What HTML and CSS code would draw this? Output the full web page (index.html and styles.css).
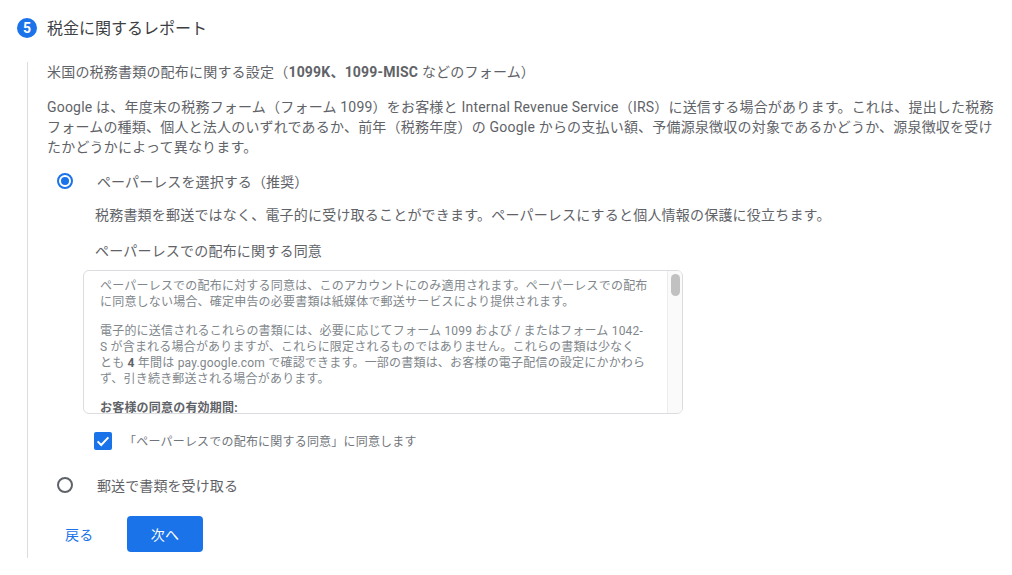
FILE: index.html
```html
<!DOCTYPE html>
<html lang="ja">
<head>
<meta charset="utf-8">
<title>税金に関するレポート</title>
<link rel="stylesheet" href="styles.css">
</head>
<body>
<div class="header">
  <span class="badge">5</span>
  <h2 class="title">税金に関するレポート</h2>
</div>
<div class="step">
  <p class="lead">米国の税務書類の配布に関する設定（<b>1099K、1099-MISC</b> などのフォーム）</p>
  <p class="intro">Google は、年度末の税務フォーム（フォーム 1099）をお客様と Internal Revenue Service（IRS）に送信する場合があります。これは、提出した税務<br>フォームの種類、個人と法人のいずれであるか、前年（税務年度）の Google からの支払い額、予備源泉徴収の対象であるかどうか、源泉徴収を受け<br>たかどうかによって異なります。</p>
  <div class="radio-row first">
    <span class="radio on"></span>
    <span class="radio-label">ペーパーレスを選択する（推奨）</span>
  </div>
  <div class="option">
    <p class="desc">税務書類を郵送ではなく、電子的に受け取ることができます。ペーパーレスにすると個人情報の保護に役立ちます。</p>
    <p class="consent-title">ペーパーレスでの配布に関する同意</p>
    <div class="consent-box">
      <div class="consent-text">
        <p>ペーパーレスでの配布に対する同意は、このアカウントにのみ適用されます。ペーパーレスでの配布<br>に同意しない場合、確定申告の必要書類は紙媒体で郵送サービスにより提供されます。</p>
        <p>電子的に送信されるこれらの書類には、必要に応じてフォーム 1099 および / またはフォーム 1042-<br>S が含まれる場合がありますが、これらに限定されるものではありません。これらの書類は少なく<br>とも <b>4</b> 年間は pay.google.com で確認できます。一部の書類は、お客様の電子配信の設定にかかわら<br>ず、引き続き郵送される場合があります。</p>
        <p><b>お客様の同意の有効期間:</b></p>
      </div>
      <div class="scrollbar"><span class="thumb"></span></div>
    </div>
    <div class="check-row">
      <span class="checkbox"><svg viewBox="0 0 18 18" width="18" height="18"><path d="M3.6 9.4l3.6 3.6 7.2-7.6" fill="none" stroke="#fff" stroke-width="2"/></svg></span>
      <span class="check-label">「ペーパーレスでの配布に関する同意」に同意します</span>
    </div>
  </div>
  <div class="radio-row second">
    <span class="radio"></span>
    <span class="radio-label">郵送で書類を受け取る</span>
  </div>
  <div class="actions">
    <button class="btn-back">戻る</button>
    <button class="btn-next">次へ</button>
  </div>
</div>
</body>
</html>
```
FILE: styles.css
```css
* { box-sizing: border-box; }
html, body { margin: 0; padding: 0; background: #fff; }
body {
  width: 1012px;
  height: 575px;
  overflow: hidden;
  font-family: Roboto, "Noto Sans CJK JP", sans-serif;
  color: #5f6368;
  font-size: 14px;
  letter-spacing: 0.2px;
}
p { margin: 0; }
b { font-weight: 700; }
.header {
  display: flex;
  align-items: center;
  gap: 10px;
  height: 20px;
  margin: 18px 0 0 17px;
}
.badge {
  width: 20px;
  height: 20px;
  border-radius: 50%;
  background: #1a73e8;
  color: #fff;
  font-size: 14px;
  font-weight: 700;
  letter-spacing: 0;
  display: flex;
  align-items: center;
  justify-content: center;
}
.title {
  margin: 0 0 3px;
  font-size: 16px;
  font-weight: 400;
  letter-spacing: 0;
  color: #3c4043;
}
.step {
  margin: 24px 0 0 27px;
  width: 975px;
  height: 496px;
  border-left: 1px solid #dadce0;
  padding-left: 19px;
}
.lead { line-height: 20px; }
.intro { line-height: 20px; margin-top: 15px; white-space: nowrap; }
.radio-row { display: flex; align-items: center; height: 20px; }
.radio-row.first { margin-top: 14px; }
.radio-row.second { margin-top: 25px; }
.radio {
  width: 16px;
  height: 16px;
  margin-left: 10px;
  border: 2px solid #5f6368;
  border-radius: 50%;
  flex: none;
  position: relative;
}
.radio.on { border-color: #1a73e8; }
.radio.on::after {
  content: "";
  position: absolute;
  inset: 2px;
  background: #1a73e8;
  border-radius: 50%;
}
.radio-label { margin-left: 24px; letter-spacing: 0.1px; }
.option { padding-left: 48px; }
.desc { margin-top: 14px; line-height: 20px; }
.consent-title { margin-top: 16px; line-height: 20px; }
.consent-box {
  display: flex;
  width: 600px;
  height: 144px;
  margin-top: 9px;
  margin-left: -12px;
  border: 1px solid #dadce0;
  border-radius: 6px;
  overflow: hidden;
}
.consent-text {
  flex: 1;
  padding: 8px 12px 0 16px;
  font-size: 12px;
  line-height: 15.7px;
  white-space: nowrap;
  color: #80868b;
  overflow: hidden;
}
.consent-text p { margin-bottom: 14px; }
.consent-text b { color: #5f6368; }
.scrollbar {
  width: 15px;
  flex: none;
  background: #fafafa;
  border-left: 1px solid #ececec;
  padding: 3px 2px;
}
.thumb { display: block; width: 9px; height: 22px; border-radius: 5px; background: #c1c1c1; margin-left: 1px; }
.check-row { display: flex; align-items: center; margin-top: 18px; margin-left: -1px; height: 18px; }
.checkbox { width: 18px; height: 18px; border-radius: 2px; background: #1a73e8; flex: none; display: flex; }
.check-label { margin: 0 0 2px 12px; font-size: 12px; color: #70757a; }
.actions { display: flex; align-items: center; margin-top: 21px; margin-left: 10px; }
.btn-back, .btn-next {
  font: inherit;
  letter-spacing: inherit;
  border: 0;
  cursor: pointer;
}
.btn-back { background: none; color: #1a73e8; padding: 0; width: 62px; text-align: left; margin-left: 8px; }
.btn-next {
  width: 76px;
  height: 36px;
  background: #1a73e8;
  color: #fff;
  border-radius: 4px;
}
```
